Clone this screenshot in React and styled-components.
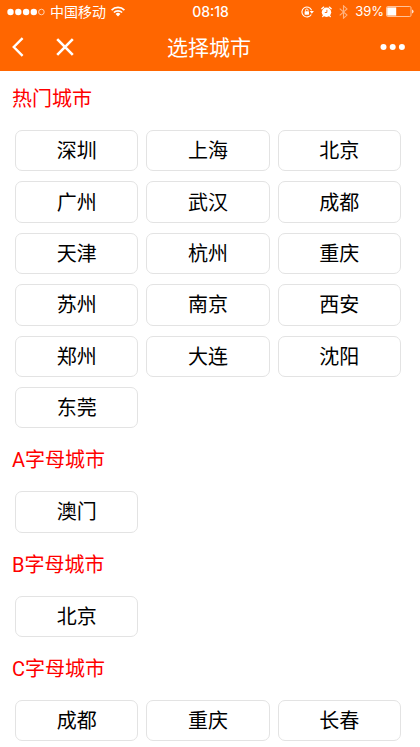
import React from "react";
import styled, { createGlobalStyle } from "styled-components";

const sections = [
  {
    title: "热门城市",
    cities: [
      "深圳",
      "上海",
      "北京",
      "广州",
      "武汉",
      "成都",
      "天津",
      "杭州",
      "重庆",
      "苏州",
      "南京",
      "西安",
      "郑州",
      "大连",
      "沈阳",
      "东莞",
    ],
  },
  { title: "A字母城市", cities: ["澳门"] },
  { title: "B字母城市", cities: ["北京"] },
  { title: "C字母城市", cities: ["成都", "重庆", "长春"] },
];

const SignalIcon = () => (
  <svg width="38" height="8" viewBox="0 0 38 8" aria-hidden="true">
    <g fill="#fff">
      <circle cx="3.5" cy="4" r="3.2" />
      <circle cx="11.3" cy="4" r="3.2" />
      <circle cx="19.1" cy="4" r="3.2" />
      <circle cx="26.8" cy="4" r="3.2" />
    </g>
    <circle cx="34.4" cy="4" r="2.8" fill="none" stroke="#ffd0b0" />
  </svg>
);

const WifiIcon = () => (
  <svg width="14" height="11" viewBox="0 0 14 11" aria-hidden="true">
    <g fill="none" stroke="#fff" strokeWidth="1.7">
      <path d="M.6 4.1a9.1 9.1 0 0 1 12.8 0" />
      <path d="M2.9 6.5a5.8 5.8 0 0 1 8.2 0" />
    </g>
    <path d="M4.6 8a3.4 3.4 0 0 1 4.8 0L7 10.5z" fill="#fff" />
  </svg>
);

const LockIcon = () => (
  <svg width="13" height="12" viewBox="0 0 13 12" aria-hidden="true">
    <path
      d="M10.3 8.4A5 5 0 1 1 10.6 4.2"
      fill="none"
      stroke="#fff"
      strokeWidth="1.1"
    />
    <path d="M8.7 5.1h4.2l-2.1 2.6z" fill="#fff" />
    <rect x="3.6" y="5.3" width="4.4" height="3.4" rx=".4" fill="#fff" />
    <path
      d="M4.5 5.4V4.3a1.3 1.3 0 0 1 2.6 0v1.1"
      fill="none"
      stroke="#fff"
      strokeWidth=".9"
    />
  </svg>
);

const AlarmIcon = () => (
  <svg width="11" height="12" viewBox="0 0 11 12" aria-hidden="true">
    <circle cx="5.5" cy="6.2" r="4.7" fill="#fff" />
    <path
      d="M.8 2.7 2.7 1.1M10.2 2.7 8.3 1.1M2.5 9.6l-.8 1M8.5 9.6l.8 1"
      stroke="#fff"
      strokeWidth="1.3"
      strokeLinecap="round"
    />
    <path
      d="M5.9 3.8v2.7H3.8"
      fill="none"
      stroke="#ff6600"
      strokeWidth=".9"
    />
  </svg>
);

const BluetoothIcon = () => (
  <svg width="9" height="14" viewBox="0 0 9 14" aria-hidden="true">
    <path
      d="M.7 3.7 8 10.1 4.5 13.2V.8L8 3.9.7 10.3"
      fill="none"
      stroke="#ffb380"
      strokeWidth="1.1"
    />
  </svg>
);

const BatteryIcon = () => (
  <svg width="28" height="11" viewBox="0 0 28 11" aria-hidden="true">
    <rect
      x=".5"
      y=".5"
      width="24.5"
      height="10"
      rx="1.2"
      fill="none"
      stroke="#ffc299"
    />
    <rect x="1.2" y="1.4" width="9" height="8.2" fill="#fff" />
    <path d="M26 3.6q1.6.3 1.6 1.9T26 7.4z" fill="#ffe0cc" />
  </svg>
);

const BackIcon = () => (
  <svg width="12" height="20" viewBox="0 0 12 20" aria-hidden="true">
    <path
      d="M10.6 1.2 1.8 10l8.8 8.8"
      fill="none"
      stroke="#fff"
      strokeWidth="2.4"
    />
  </svg>
);

const CloseIcon = () => (
  <svg width="18" height="18" viewBox="0 0 18 18" aria-hidden="true">
    <path
      d="m1.2 1.2 15.6 15.6M16.8 1.2 1.2 16.8"
      fill="none"
      stroke="#fff"
      strokeWidth="2.6"
    />
  </svg>
);

const MoreIcon = () => (
  <svg width="26" height="8" viewBox="0 0 26 8" aria-hidden="true">
    <g fill="#fff">
      <circle cx="3.5" cy="4" r="3" />
      <circle cx="12.7" cy="4" r="3" />
      <circle cx="21.9" cy="4" r="3" />
    </g>
  </svg>
);

const App = () => {
  return (
    <Container>
      <GlobalStyle />
      <Header>
        <StatusBar>
          <StatusGroup $gap={5}>
            <SignalIcon />
            <Carrier>中国移动</Carrier>
            <WifiIcon />
          </StatusGroup>
          <Time>08:18</Time>
          <StatusGroup $gap={7} $end>
            <LockIcon />
            <AlarmIcon />
            <BluetoothIcon />
            <Battery>
              39%
              <BatteryIcon />
            </Battery>
          </StatusGroup>
        </StatusBar>
        <NavBar>
          <NavGroup>
            <NavButton type="button" aria-label="返回">
              <BackIcon />
            </NavButton>
            <NavButton type="button" aria-label="关闭">
              <CloseIcon />
            </NavButton>
          </NavGroup>
          <Title>选择城市</Title>
          <NavGroup $end>
            <NavButton type="button" aria-label="更多">
              <MoreIcon />
            </NavButton>
          </NavGroup>
        </NavBar>
      </Header>
      <main>
        {sections.map((section) => (
          <section key={section.title}>
            <SectionTitle>{section.title}</SectionTitle>
            <CityGrid>
              {section.cities.map((city) => (
                <City type="button" key={city}>
                  {city}
                </City>
              ))}
            </CityGrid>
          </section>
        ))}
      </main>
    </Container>
  );
};

const GlobalStyle = createGlobalStyle`
  * {
    box-sizing: border-box;
  }
  body {
    margin: 0;
    background-color: #fff;
    font-family: Roboto, "Noto Sans CJK SC", sans-serif;
  }
  svg {
    display: block;
    flex-shrink: 0;
  }
`;
const Container = styled.div`
  width: 100%;
`;
const Header = styled.header`
  color: #fff;
  background-color: #ff6600;
`;
const StatusBar = styled.div`
  display: grid;
  grid-template-columns: 1fr auto 1fr;
  align-items: center;
  height: 23px;
  padding: 0 6px 0 7px;
  font-family: Inter, "Noto Sans CJK SC", sans-serif;
  font-size: 13px;
  line-height: 23px;
`;
const StatusGroup = styled.div`
  display: flex;
  align-items: center;
  justify-content: ${(props) => (props.$end ? "flex-end" : "flex-start")};
  gap: ${(props) => props.$gap}px;
`;
const Carrier = styled.span`
  font-size: 14px;
`;
const Time = styled.span`
  font-size: 14px;
  font-weight: 500;
`;
const Battery = styled.span`
  display: flex;
  align-items: center;
  gap: 2px;
`;
const NavBar = styled.nav`
  display: grid;
  grid-template-columns: 1fr auto 1fr;
  align-items: center;
  height: 48px;
  padding: 0 14px 0 12px;
`;
const NavGroup = styled.div`
  display: flex;
  align-items: center;
  justify-content: ${(props) => (props.$end ? "flex-end" : "flex-start")};
  gap: 32px;
`;
const NavButton = styled.button`
  display: flex;
  align-items: center;
  height: 40px;
  padding: 0;
  border: none;
  background: none;
  cursor: pointer;
`;
const Title = styled.h1`
  margin: 0;
  padding-top: 2px;
  font-size: 21px;
  font-weight: 400;
  line-height: 46px;
`;
const SectionTitle = styled.h2`
  margin: 0;
  padding: 14px 12px 17px;
  color: #ff0000;
  font-size: 20px;
  font-weight: 400;
  line-height: 28px;
`;
const CityGrid = styled.div`
  display: grid;
  grid-template-columns: repeat(3, 1fr);
  gap: 10px 8px;
  padding: 0 19px 4px 15px;
`;
const City = styled.button`
  aspect-ratio: 149 / 50;
  padding: 1px 0 0;
  border: 1px solid #e3e3e3;
  border-radius: 7px;
  color: #000;
  background-color: #fff;
  font-family: inherit;
  font-size: 20px;
  line-height: 28px;
  cursor: pointer;
`;

export default App;
